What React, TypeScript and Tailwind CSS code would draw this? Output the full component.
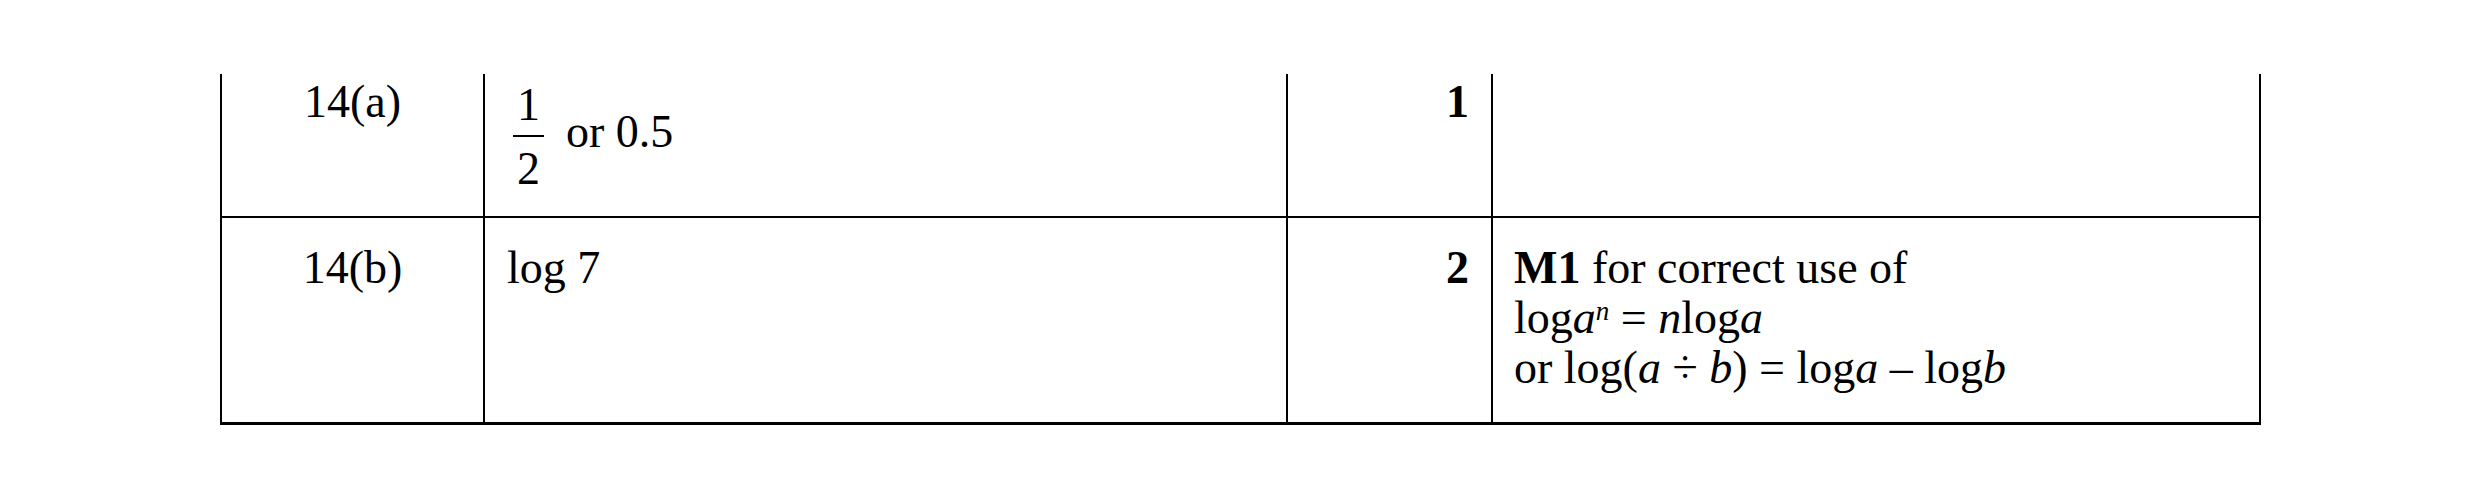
import React from "react";

const serif = { fontFamily: '"Liberation Serif", "Times New Roman", serif' };

export default function App() {
  return (
    <div
      className="w-[2480px] h-[501px] bg-white pt-[74px] text-black text-[46px] leading-[50px]"
      style={serif}
    >
      <div className="ml-[220px] w-[2041px] border-l-2 border-r-2 border-b-[3px] border-black">
        {/* Row 14(a) */}
        <div className="flex h-[144px] border-b-2 border-black">
          <div className="w-[263px] border-r-2 border-black pt-[3px] text-center">14(a)</div>
          <div className="w-[803px] border-r-2 border-black pt-[3px] pl-[22px]">
            <div className="flex items-start">
              <span className="ml-[6px] mt-[7px] inline-flex flex-col items-center">
                <span className="block leading-[42px] px-[4px] pb-[9px] border-b-2 border-black">1</span>
                <span className="block leading-[42px] px-[4px] pt-[11px]">2</span>
              </span>
              <span className="ml-[22px] mt-[30px]">or 0.5</span>
            </div>
          </div>
          <div className="w-[205px] border-r-2 border-black pt-[3px] pr-[22px] text-right font-bold">1</div>
          <div className="flex-1 pt-[3px] pl-[21px]"></div>
        </div>
        {/* Row 14(b) */}
        <div className="flex h-[204px]">
          <div className="w-[263px] border-r-2 border-black pt-[25px] text-center">14(b)</div>
          <div className="w-[803px] border-r-2 border-black pt-[25px] pl-[22px]">log 7</div>
          <div className="w-[205px] border-r-2 border-black pt-[25px] pr-[22px] text-right font-bold">2</div>
          <div className="flex-1 pt-[25px] pl-[21px]">
            <div>
              <span className="font-bold">M1</span> for correct use of
            </div>
            <div>
              log<i>a</i>
              <sup className="italic text-[27px]">n</sup> = <i>n</i>log<i>a</i>
            </div>
            <div>
              or log(<i>a</i> ÷ <i>b</i>) = log<i>a</i> – log<i>b</i>
            </div>
          </div>
        </div>
      </div>
    </div>
  );
}
